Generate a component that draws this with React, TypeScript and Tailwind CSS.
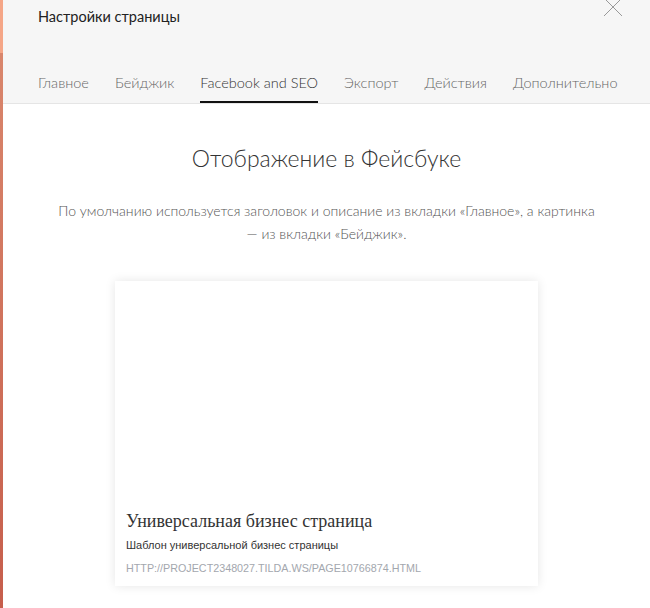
export default function App() {
  const tabs = ["Главное", "Бейджик", "Facebook and SEO", "Экспорт", "Действия", "Дополнительно"];
  const active = "Facebook and SEO";

  return (
    <div className="flex h-[608px] w-[650px] overflow-hidden bg-white font-['Lato',sans-serif]">
      <div className="flex w-[3px] shrink-0 flex-col">
        <div className="h-[53px] bg-[#f5a687]" />
        <div className="flex-1 bg-gradient-to-b from-[#d9866c] to-[#c65e4c]" />
      </div>

      <div className="relative flex min-w-0 flex-1 flex-col">
        <div className="flex h-[104px] flex-col justify-between border-b border-[#e5e5e5] bg-[#f6f6f6] pl-[35px]">
          <div className="mt-[7px] text-[14.5px] leading-[20px] text-[#222]">Настройки страницы</div>
          <div className="flex gap-[26px]">
            {tabs.map((t) => (
              <div
                key={t}
                className={
                  t === active
                    ? "whitespace-nowrap border-b-2 border-[#111] pb-[8px] text-[14.5px] font-light leading-[20px] text-[#333]"
                    : "whitespace-nowrap border-b-2 border-transparent pb-[8px] text-[14.5px] font-light leading-[20px] text-[#666]"
                }
              >
                {t}
              </div>
            ))}
          </div>
        </div>

        <button className="absolute right-[27px] top-[-3px] h-[20px] w-[20px]">
          <svg viewBox="0 0 20 20" className="h-[20px] w-[20px]" fill="none" stroke="#999" strokeWidth="1">
            <path d="M1 1L19 19M19 1L1 19" />
          </svg>
        </button>

        <div className="flex flex-col items-center">
          <h1 className="mt-[38px] text-[23px] font-light leading-[32px] text-[#333]">Отображение в Фейсбуке</h1>
          <p className="mt-[25px] w-[548px] text-center text-[14px] font-light leading-[23px] text-[#555]">
            По умолчанию используется заголовок и описание из вкладки «Главное», а картинка — из вкладки «Бейджик».
          </p>

          <div className="mt-[36px] flex h-[305px] w-[423px] flex-col justify-end bg-white px-[11px] pb-[11px] shadow-[0_0_10px_rgba(0,0,0,0.1)]">
            <div className="font-['Liberation_Serif',serif] text-[18px] leading-[24px] text-[#333]">
              Универсальная бизнес страница
            </div>
            <div className="mt-[4px] font-['Liberation_Sans',sans-serif] text-[11px] leading-[16px] text-[#333]">
              Шаблон универсальной бизнес страницы
            </div>
            <div className="mt-[8px] font-['Liberation_Sans',sans-serif] text-[10.75px] uppercase leading-[14px] text-[#a3a7ae]">
              http://project2348027.tilda.ws/page10766874.html
            </div>
          </div>
        </div>
      </div>
    </div>
  );
}
